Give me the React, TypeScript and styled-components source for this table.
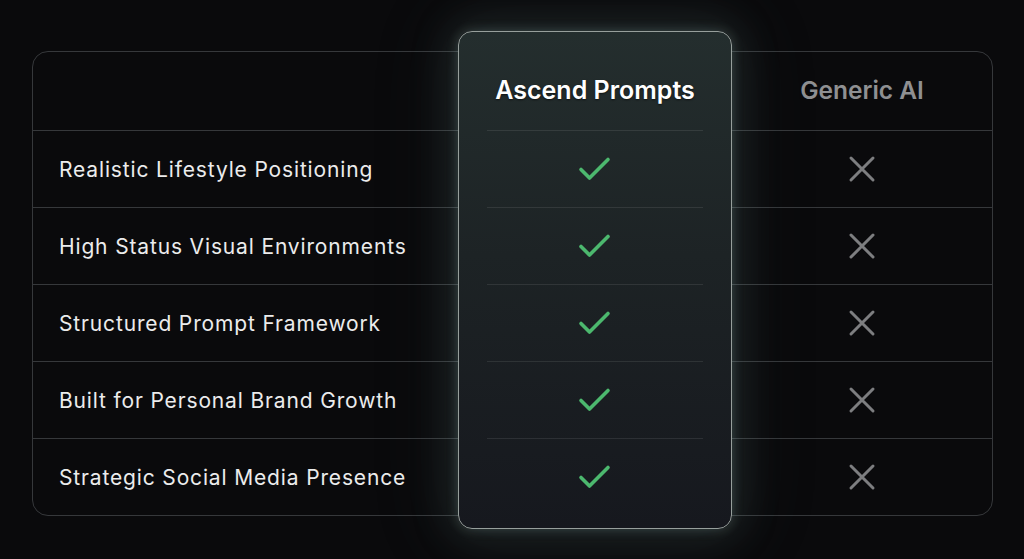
import styled, { createGlobalStyle } from 'styled-components';

const GlobalStyle = createGlobalStyle`
  html, body {
    margin: 0;
    padding: 0;
    background: #0a0a0c;
    font-family: Inter, "Noto Sans", "Liberation Sans", sans-serif;
    -webkit-font-smoothing: antialiased;
  }
`;

const Page = styled.div`
  width: 1024px;
  height: 559px;
  padding: 51px 0 0 32px;
  box-sizing: border-box;
  background: #0a0a0c;
  overflow: hidden;
`;

const Table = styled.div`
  width: 961px;
  box-sizing: border-box;
  border: 1px solid #36383b;
  border-radius: 16px;
  display: grid;
  grid-template-columns: 425px 274px 260px;
`;

const Column = styled.div`
  display: flex;
  flex-direction: column;
`;

const HighlightColumn = styled.div`
  position: relative;
  z-index: 1;
  margin: -21px 0 -14px;
  padding: 20px 0 13px;
  display: flex;
  flex-direction: column;
  box-sizing: border-box;
  border: 1.5px solid #979f9c;
  border-radius: 14px;
  background: linear-gradient(180deg, #242e2e 0%, #1d2325 45%, #16181e 100%);
  box-shadow:
    0 0 12px rgba(170, 210, 200, 0.24),
    0 0 40px 10px rgba(110, 150, 140, 0.16),
    0 0 80px 20px rgba(90, 120, 115, 0.08);
`;

const HeaderCell = styled.div<{ $muted?: boolean; $inset?: boolean }>`
  height: 79px;
  box-sizing: border-box;
  display: flex;
  align-items: center;
  justify-content: center;
  padding-bottom: 2px;
  font-size: ${(p) => (p.$muted ? '24.5px' : '25px')};
  font-weight: 600;
  color: ${(p) => (p.$muted ? '#8f9092' : '#ffffff')};
  text-shadow: ${(p) => (p.$muted ? 'none' : '0 1px 2px rgba(0,0,0,0.6)')};
  border-bottom: 1px solid
    ${(p) => (p.$inset ? 'rgba(255,255,255,0.09)' : '#36383b')};
  margin: ${(p) => (p.$inset ? '0 28px' : '0')};
`;

const Cell = styled.div<{ $inset?: boolean; $last?: boolean }>`
  height: ${(p) => (p.$last ? '76px' : '77px')};
  box-sizing: border-box;
  display: flex;
  align-items: center;
  justify-content: center;
  margin: ${(p) => (p.$inset ? '0 28px' : '0')};
  border-bottom: ${(p) =>
    p.$last ? 'none' : p.$inset ? '1px solid rgba(255,255,255,0.09)' : '1px solid #36383b'};
`;

const LabelCell = styled(Cell)`
  justify-content: flex-start;
  padding-left: 26px;
  font-size: 21px;
  font-weight: 400;
  color: #ececec;
  letter-spacing: 0.85px;
`;

const Check = () => (
  <svg width="36" height="28" viewBox="0 0 36 28" fill="none">
    <path
      d="M4 14.5 L12.5 23 L31 4.5"
      stroke="#4cb86e"
      strokeWidth="3.6"
      strokeLinecap="round"
      strokeLinejoin="round"
    />
  </svg>
);

const Cross = () => (
  <svg width="28" height="28" viewBox="0 0 28 28" fill="none">
    <path
      d="M3 3 L25 25 M25 3 L3 25"
      stroke="#7d7e80"
      strokeWidth="3"
      strokeLinecap="round"
    />
  </svg>
);

const features = [
  'Realistic Lifestyle Positioning',
  'High Status Visual Environments',
  'Structured Prompt Framework',
  'Built for Personal Brand Growth',
  'Strategic Social Media Presence',
];

const App = () => {
  const last = features.length - 1;
  return (
    <>
      <GlobalStyle />
      <Page>
        <Table>
          <Column>
            <HeaderCell />
            {features.map((f, i) => (
              <LabelCell key={f} $last={i === last}>
                {f}
              </LabelCell>
            ))}
          </Column>

          <HighlightColumn>
            <HeaderCell $inset>Ascend Prompts</HeaderCell>
            {features.map((f, i) => (
              <Cell key={f} $inset $last={i === last}>
                <Check />
              </Cell>
            ))}
          </HighlightColumn>

          <Column>
            <HeaderCell $muted>Generic AI</HeaderCell>
            {features.map((f, i) => (
              <Cell key={f} $last={i === last}>
                <Cross />
              </Cell>
            ))}
          </Column>
        </Table>
      </Page>
    </>
  );
};

export default App;
